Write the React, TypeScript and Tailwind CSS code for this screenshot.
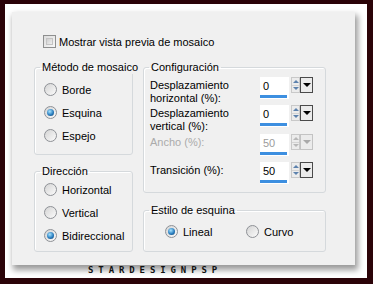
import type { ReactNode } from "react";

const font = { fontFamily: '"Liberation Sans", Arial, sans-serif' };

function Radio({ checked, label }: { checked?: boolean; label: string }) {
  return (
    <div className="flex items-center gap-[5px] h-[23px]">
      <span className="w-[13px] h-[13px] rounded-full border border-[#8e9196] bg-[linear-gradient(135deg,#d4d4d4,#fbfbfb)] flex items-center justify-center">
        {checked && (
          <span className="w-[7px] h-[7px] rounded-full bg-[radial-gradient(circle_at_40%_35%,#a8e4ff,#2b7fc0_55%,#0d3a66)]" />
        )}
      </span>
      <span className="text-[11px] leading-[14px] text-black">{label}</span>
    </div>
  );
}

function Group({ title, className, children }: { title: string; className?: string; children: ReactNode }) {
  return (
    <fieldset className="min-w-0 w-full border border-[#d5d9dc] rounded-[3px] shadow-[inset_1px_1px_0_#fff]">
      <legend className="ml-[5px] px-[2px] text-[11px] leading-[14px] text-black whitespace-nowrap">{title}</legend>
      <div className={className}>{children}</div>
    </fieldset>
  );
}

function Spinner({ value, disabled }: { value: string; disabled?: boolean }) {
  return (
    <div className="flex items-start h-[22px]">
      <div className="w-[29px] h-[22px] bg-white flex flex-col">
        <span className={`pl-[3px] pt-[2px] text-[11px] leading-[14px] ${disabled ? "text-[#9c9c9c]" : "text-black"}`}>{value}</span>
        <span className="mt-auto mb-[1px] w-[27px] h-[3px] bg-[#3d8fe0]" />
      </div>
      <div className="ml-[2px] w-[9px] h-[16px] flex flex-col border border-[#c9c9c9] bg-[#ececec]">
        <span className="flex-1 flex items-center justify-center border-b border-[#d4d4d4]">
          <span className={`w-0 h-0 border-x-[3px] border-x-transparent border-b-[3px] ${disabled ? "border-b-[#b8b8b8]" : "border-b-[#5d82ad]"}`} />
        </span>
        <span className="flex-1 flex items-center justify-center">
          <span className={`w-0 h-0 border-x-[3px] border-x-transparent border-t-[3px] ${disabled ? "border-t-[#b8b8b8]" : "border-t-[#5d82ad]"}`} />
        </span>
      </div>
      <div className={`w-[13px] h-[16px] flex items-center justify-center border bg-[#ebebeb] ${disabled ? "border-[#c3c3c3]" : "border-[#4a4a4a]"}`}>
        <span className={`w-0 h-0 border-x-[4px] border-x-transparent border-t-[4px] ${disabled ? "border-t-[#a9a9a9]" : "border-t-black"}`} />
      </div>
    </div>
  );
}

function ConfigRow({ label, children, disabled, className }: { label: ReactNode; children: ReactNode; disabled?: boolean; className?: string }) {
  return (
    <div className={`flex justify-between items-start ${className ?? ""}`}>
      <span className={`text-[11px] leading-[13px] mt-[2px] ${disabled ? "text-[#ababab]" : "text-black"}`}>{label}</span>
      {children}
    </div>
  );
}

export default function App() {
  return (
    <div className="w-[373px] h-[284px] bg-[#2b0308] pt-[4px] pl-[5px] pr-[6px] pb-[6px]" style={font}>
      <div className="h-full bg-white pt-[8px] pl-[7px] flex flex-col">
        <div className="w-[343px] h-[253px] bg-[#f0f0f0] shadow-[2px_4px_6px_1px_rgba(0,0,0,0.4)] pt-[23px] px-[22px]">
          {/* Preview checkbox */}
          <div className="ml-[9px] flex items-center gap-[3px] h-[13px]">
            <span className="w-[13px] h-[13px] border border-[#8e8f8f] bg-[linear-gradient(135deg,#dcdcdc,#f8f8f8)] p-[2px]">
              <span className="block w-full h-full border border-[#c4c4c4] bg-[linear-gradient(135deg,#cfcfcf,#efefef)]" />
            </span>
            <span className="text-[11px] leading-[14px] text-black">Mostrar vista previa de mosaico</span>
          </div>

          <div className="mt-[12px] flex gap-[10px]">
            {/* Left column */}
            <div className="w-[99px] shrink-0 flex flex-col gap-[9px]">
              <Group title="Método de mosaico" className="pl-[9px] pt-[4px] pb-[7px]">
                <Radio label="Borde" />
                <Radio label="Esquina" checked />
                <Radio label="Espejo" />
              </Group>
              <Group title="Dirección" className="pl-[9px] pt-0 pb-[4px]">
                <Radio label="Horizontal" />
                <Radio label="Vertical" />
                <Radio label="Bidireccional" checked />
              </Group>
            </div>

            {/* Right column */}
            <div className="w-[183px] shrink-0 flex flex-col gap-[10px]">
              <Group title="Configuración" className="pl-[6px] pr-[12px] pt-[3px] pb-[8px]">
                <ConfigRow label={<>Desplazamiento<br />horizontal (%):</>} className="h-[28px]">
                  <Spinner value="0" />
                </ConfigRow>
                <ConfigRow label={<>Desplazamiento<br />vertical (%):</>} className="h-[29px]">
                  <Spinner value="0" />
                </ConfigRow>
                <ConfigRow label="Ancho (%):" disabled className="h-[28px]">
                  <Spinner value="50" disabled />
                </ConfigRow>
                <ConfigRow label="Transición (%):" className="h-[22px]">
                  <Spinner value="50" />
                </ConfigRow>
              </Group>
              <Group title="Estilo de esquina" className="pl-[21px] pt-[3px] pb-[8px] flex">
                <div className="w-[81px]">
                  <Radio label="Lineal" checked />
                </div>
                <Radio label="Curvo" />
              </Group>
            </div>
          </div>
        </div>
        <div
          className="ml-[76px] pt-[1px] text-[9px] leading-[9px] font-bold tracking-[4.9px] text-[#111]"
          style={{ fontFamily: '"DejaVu Sans Mono", monospace' }}
        >
          STARDESIGNPSP
        </div>
      </div>
    </div>
  );
}
